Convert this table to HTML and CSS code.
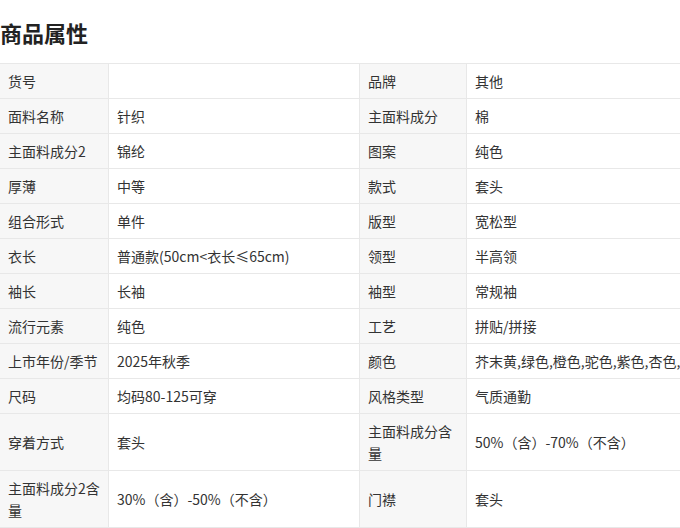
FILE: index.html
```html
<!DOCTYPE html>
<html lang="zh-CN">
<head>
<meta charset="utf-8">
<title>商品属性</title>
<link rel="stylesheet" href="styles.css">
</head>
<body>
<h2 class="title">商品属性</h2>
<table class="attrs">
  <colgroup>
    <col class="c-label1"><col class="c-value1"><col class="c-label2"><col class="c-value2">
  </colgroup>
  <tbody>
    <tr><td class="k">货号</td><td class="v"></td><td class="k">品牌</td><td class="v">其他</td></tr>
    <tr><td class="k">面料名称</td><td class="v">针织</td><td class="k">主面料成分</td><td class="v">棉</td></tr>
    <tr><td class="k">主面料成分2</td><td class="v">锦纶</td><td class="k">图案</td><td class="v">纯色</td></tr>
    <tr><td class="k">厚薄</td><td class="v">中等</td><td class="k">款式</td><td class="v">套头</td></tr>
    <tr><td class="k">组合形式</td><td class="v">单件</td><td class="k">版型</td><td class="v">宽松型</td></tr>
    <tr><td class="k">衣长</td><td class="v">普通款(50cm&lt;衣长≤65cm)</td><td class="k">领型</td><td class="v">半高领</td></tr>
    <tr><td class="k">袖长</td><td class="v">长袖</td><td class="k">袖型</td><td class="v">常规袖</td></tr>
    <tr><td class="k">流行元素</td><td class="v">纯色</td><td class="k">工艺</td><td class="v">拼贴/拼接</td></tr>
    <tr><td class="k">上市年份/季节</td><td class="v">2025年秋季</td><td class="k">颜色</td><td class="v nowrap">芥末黄,绿色,橙色,驼色,紫色,杏色,黑色</td></tr>
    <tr><td class="k">尺码</td><td class="v">均码80-125可穿</td><td class="k">风格类型</td><td class="v">气质通勤</td></tr>
    <tr><td class="k">穿着方式</td><td class="v">套头</td><td class="k">主面料成分含量</td><td class="v">50%（含）-70%（不含）</td></tr>
    <tr><td class="k">主面料成分2含量</td><td class="v">30%（含）-50%（不含）</td><td class="k">门襟</td><td class="v">套头</td></tr>
  </tbody>
</table>
</body>
</html>
```
FILE: styles.css
```css
html, body {
  margin: 0;
  padding: 0;
  overflow: hidden;
  background: #ffffff;
}
body {
  font-family: "Noto Sans CJK SC", "Noto Sans", sans-serif;
  color: #333333;
  width: 680px;
  height: 528px;
}
.title {
  margin: 0;
  padding-top: 17px;
  font-size: 22px;
  line-height: 30px;
  font-weight: 700;
  color: #222222;
}
.attrs {
  margin-top: 16px;
  margin-left: -1px;
  border-collapse: collapse;
  table-layout: fixed;
  width: 720px;
  font-size: 14px;
  line-height: 22px;
}
.c-label1 { width: 109px; }
.c-value1 { width: 251px; }
.c-label2 { width: 107px; }
.c-value2 { width: 253px; }
.attrs td {
  border: 1px solid #e8e8e8;
  padding: 6px 7px 6px 8px;
  vertical-align: middle;
  word-break: break-all;
}
.attrs td.k {
  background: #f7f7f7;
}
.attrs td.v {
  background: #ffffff;
}
.attrs td.nowrap {
  white-space: nowrap;
  overflow: hidden;
}
```
